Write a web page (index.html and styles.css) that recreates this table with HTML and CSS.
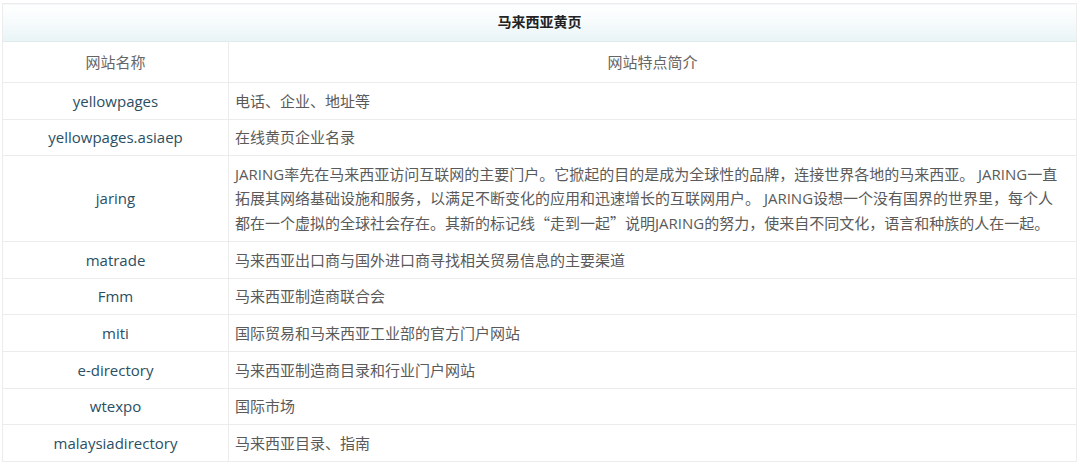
FILE: index.html
```html
<!DOCTYPE html>
<html lang="zh-CN">
<head>
<meta charset="utf-8">
<title>马来西亚黄页</title>
<link rel="stylesheet" href="styles.css">
</head>
<body>
<table class="yp">
  <colgroup><col class="c-name"><col class="c-desc"></colgroup>
  <thead>
    <tr class="title-row"><th colspan="2">马来西亚黄页</th></tr>
    <tr class="head-row"><td class="name">网站名称</td><td class="center">网站特点简介</td></tr>
  </thead>
  <tbody>
    <tr><td class="name site">yellowpages</td><td>电话、企业、地址等</td></tr>
    <tr><td class="name site">yellowpages.asiaep</td><td>在线黄页企业名录</td></tr>
    <tr class="tall"><td class="name site">jaring</td><td class="long">JARING率先在马来西亚访问互联网的主要门户。它掀起的目的是成为全球性的品牌，连接世界各地的马来西亚。 JARING一直拓展其网络基础设施和服务，以满足不断变化的应用和迅速增长的互联网用户。 JARING设想一个没有国界的世界里，每个人都在一个虚拟的全球社会存在。其新的标记线<span class="q">“走到一起”</span>说明JARING的努力，使来自不同文化，语言和种族的人在一起。</td></tr>
    <tr><td class="name site">matrade</td><td>马来西亚出口商与国外进口商寻找相关贸易信息的主要渠道</td></tr>
    <tr><td class="name site">Fmm</td><td>马来西亚制造商联合会</td></tr>
    <tr><td class="name site">miti</td><td>国际贸易和马来西亚工业部的官方门户网站</td></tr>
    <tr><td class="name site">e-directory</td><td>马来西亚制造商目录和行业门户网站</td></tr>
    <tr><td class="name site">wtexpo</td><td>国际市场</td></tr>
    <tr><td class="name site">malaysiadirectory</td><td>马来西亚目录、指南</td></tr>
  </tbody>
</table>
</body>
</html>
```

FILE: styles.css
```css
html, body {
  margin: 0;
  background: #ffffff;
}
body {
  padding: 3px 3px 0 2px;
  font-family: "Open Sans", "Noto Sans CJK SC", sans-serif;
  font-size: 15px;
  color: #5a5a5a;
}
.yp {
  width: 1075px;
  border-collapse: collapse;
  border: 1px solid #cfd3d6;
  table-layout: fixed;
}
.c-name { width: 226px; }
.yp td, .yp th {
  border: 1px solid #ececec;
  padding: 0 6px;
  line-height: 24.5px;
  vertical-align: middle;
}
.yp td.long { padding-right: 12px; }
.q { font-family: "Noto Sans CJK SC", sans-serif; }
.title-row th {
  height: 37px;
  padding: 0;
  font-size: 14px;
  font-weight: bold;
  color: #222222;
  background: linear-gradient(to bottom, #ffffff 0%, #f7fbfc 45%, #e8f4f7 100%);
  border-bottom: 1px solid #dfeceb;
  text-align: center;
}
.head-row td {
  height: 40px;
  color: #666666;
}
.center, .name { text-align: center; }
.site { color: #2a4f63; }
tbody tr { height: 36.6px; }
tbody tr.tall { height: 86px; }
```
